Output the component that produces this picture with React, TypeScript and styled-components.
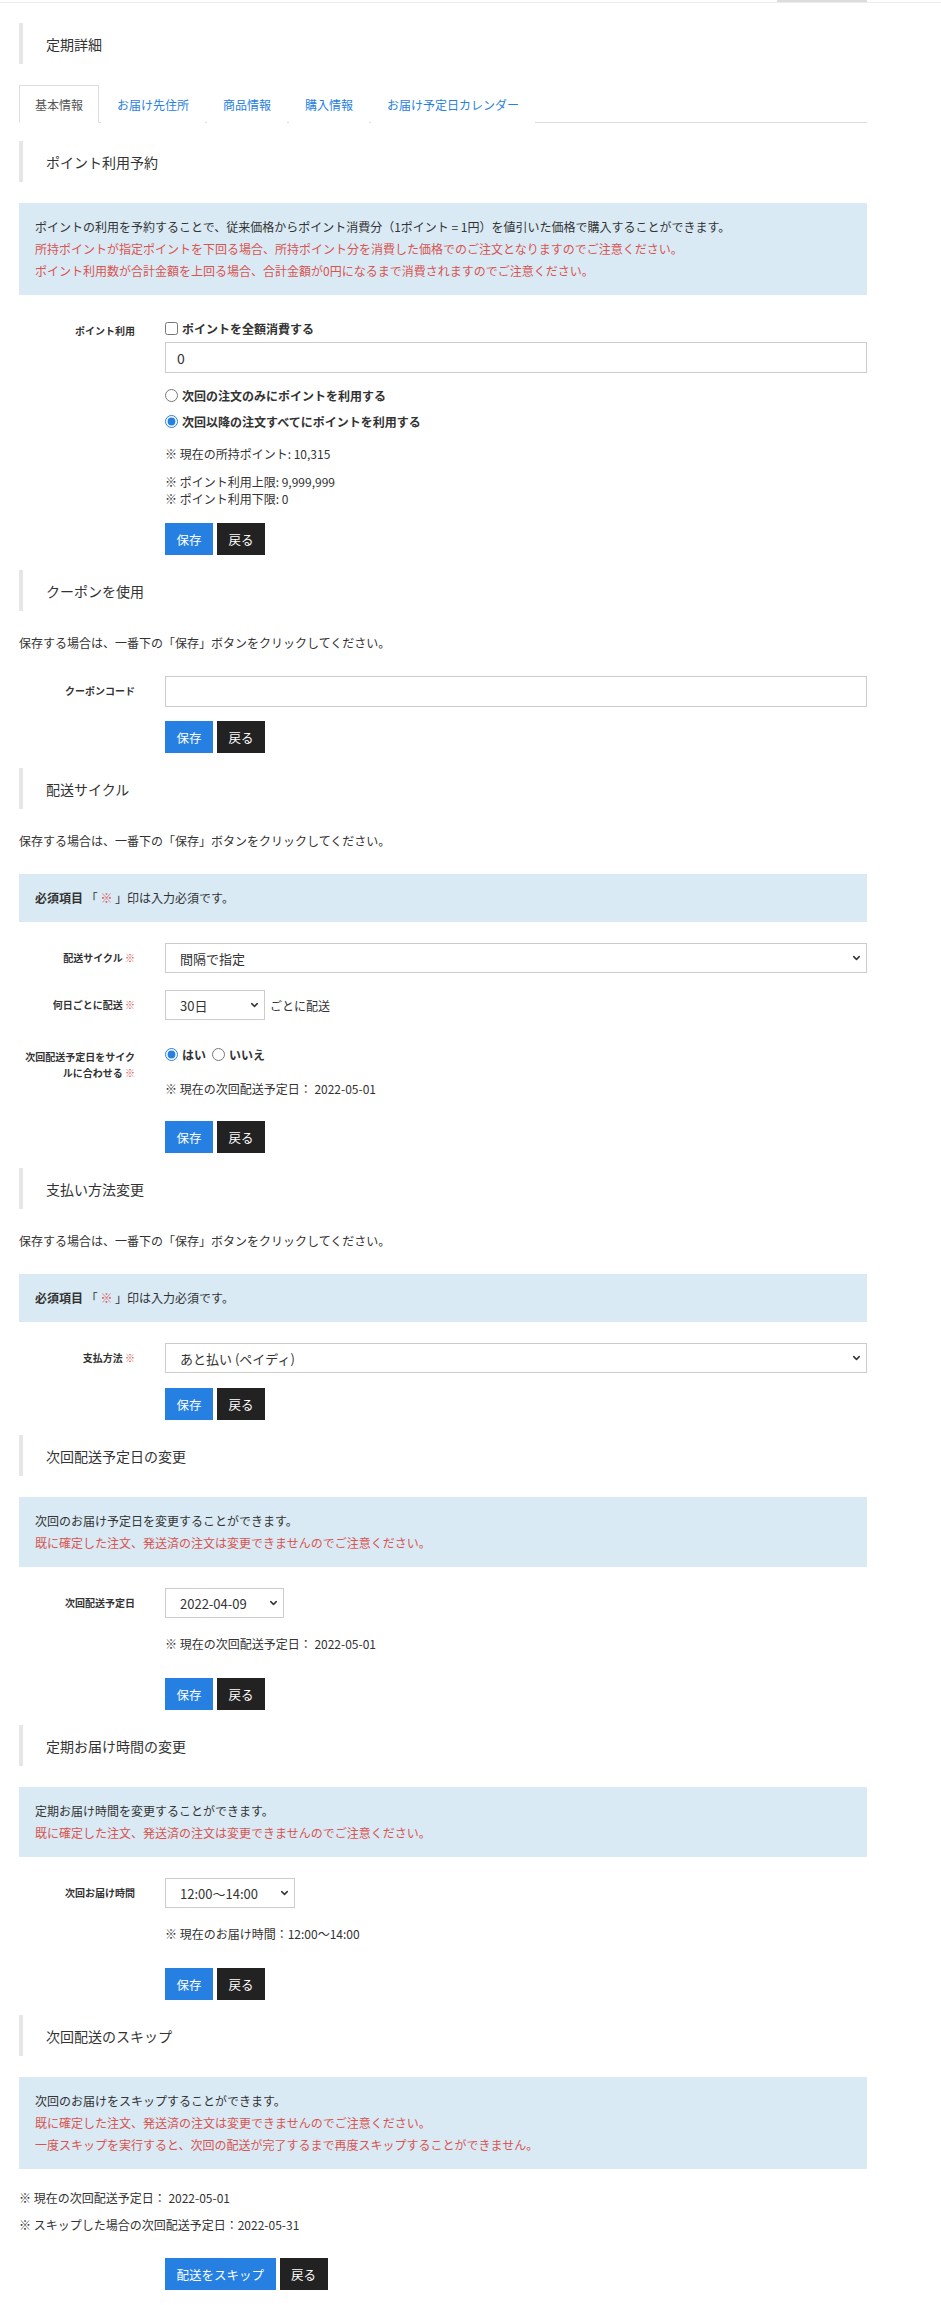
import React from "react";
import styled, { createGlobalStyle } from "styled-components";
import { ChevronDown } from "lucide-react";

const GlobalStyle = createGlobalStyle`
  html, body { margin: 0; padding: 0; background: #fff; }
  body {
    font-family: "Noto Sans CJK JP", "Noto Sans", sans-serif;
    color: #333;
    font-size: 12px;
  }
  * { box-sizing: border-box; }
`;

const RED = "#d9534f";
const BLUE = "#2680e2";

const TopStrip = styled.div`
  display: flex;
  justify-content: flex-end;
  padding-right: 74px;
  height: 3px;
  border-bottom: 1px solid #ececec;
`;

const TopTab = styled.div`
  width: 90px;
  height: 2px;
  background: #dcdcdc;
`;

const Page = styled.main`
  width: 848px;
  margin-left: 19px;
  padding-top: 20px;
  padding-bottom: 13px;
  display: flex;
  flex-direction: column;
`;

const Heading = styled.h2<{ $mt?: number; $mb?: number }>`
  margin: ${(p) => p.$mt ?? 15}px 0 ${(p) => p.$mb ?? 21}px;
  height: 41px;
  display: flex;
  align-items: center;
  border-left: 4px solid #e6e6e6;
  padding-left: 23px;
  font-size: 14px;
  font-weight: 400;
  color: #333;
`;

const TabList = styled.ul`
  list-style: none;
  margin: 0 0 18px;
  padding: 0;
  display: flex;
  height: 38px;
  border-bottom: 1px solid #ddd;
`;

const Tab = styled.li<{ $active?: boolean }>`
  margin: 0 2px -1px 0;
  padding: 0 15px;
  display: flex;
  align-items: center;
  font-size: 12px;
  color: ${(p) => (p.$active ? "#555" : BLUE)};
  border: 1px solid ${(p) => (p.$active ? "#ddd" : "transparent")};
  border-bottom-color: ${(p) => (p.$active ? "#fff" : "transparent")};
  background: #fff;
`;

const InfoBox = styled.div<{ $mb?: number }>`
  background: #d9eaf5;
  padding: 13px 16px;
  margin-bottom: ${(p) => p.$mb ?? 21}px;
  font-size: 12px;
  line-height: 22px;
`;

const InfoLine = styled.p<{ $red?: boolean }>`
  margin: 0;
  color: ${(p) => (p.$red ? RED : "#333")};
`;

const Strong = styled.strong`
  font-weight: 700;
`;

const Mark = styled.span`
  color: ${RED};
  font-weight: 400;
`;

const Lead = styled.p`
  margin: 0 0 22px;
  font-size: 12px;
  line-height: 22px;
`;

const FormRow = styled.div<{ $mt?: number }>`
  display: grid;
  grid-template-columns: 116px 1fr;
  column-gap: 30px;
  margin-top: ${(p) => p.$mt ?? 0}px;
`;

const Label = styled.div`
  text-align: right;
  font-size: 10px;
  font-weight: 700;
  line-height: 16px;
  padding-top: 7px;
  color: #333;
`;

const Field = styled.div`
  display: flex;
  flex-direction: column;
  align-items: flex-start;
  min-width: 0;
`;

const TextInput = styled.input<{ $mt?: number }>`
  width: 100%;
  height: 31px;
  margin-top: ${(p) => p.$mt ?? 0}px;
  border: 1px solid #ccc;
  padding: 0 11px;
  font-family: inherit;
  font-size: 14px;
  color: #333;
  background: #fff;
  outline: none;
`;

const SelectWrap = styled.div<{ $w?: number }>`
  position: relative;
  width: ${(p) => (p.$w ? `${p.$w}px` : "100%")};
  flex: none;
`;

const SelectBox = styled.select`
  appearance: none;
  -webkit-appearance: none;
  width: 100%;
  height: 30px;
  border: 1px solid #ccc;
  border-radius: 0;
  padding: 0 24px 0 14px;
  font-family: inherit;
  font-size: 13px;
  color: #333;
  background: #fff;
  outline: none;
`;

const Chevron = styled(ChevronDown)`
  position: absolute;
  right: 5px;
  top: 50%;
  transform: translateY(-50%);
  pointer-events: none;
  color: #333;
`;

const InlineGroup = styled.div`
  display: flex;
  align-items: center;
  gap: 5px;
  font-size: 12px;
`;

const CheckLine = styled.label<{ $mt?: number }>`
  display: flex;
  align-items: center;
  gap: 4px;
  height: 24px;
  margin-top: ${(p) => p.$mt ?? 0}px;
  font-size: 12px;
  font-weight: 700;
  color: #333;
`;

const ChoiceRow = styled.div<{ $mt?: number }>`
  display: flex;
  align-items: center;
  gap: 6px;
  margin-top: ${(p) => p.$mt ?? 0}px;
`;

const Box = styled.input`
  margin: 0;
  width: 13px;
  height: 13px;
  accent-color: ${BLUE};
`;

const Note = styled.p<{ $mt?: number }>`
  margin: ${(p) => p.$mt ?? 0}px 0 0;
  font-size: 12px;
  line-height: 17px;
  color: #333;
`;

const ButtonRow = styled.div<{ $mt?: number }>`
  display: flex;
  gap: 4px;
  margin-top: ${(p) => p.$mt ?? 15}px;
  padding-left: 146px;
`;

const Button = styled.button<{ $variant?: "primary" | "dark" }>`
  height: 32px;
  padding: 0 11.5px;
  border: none;
  border-radius: 0;
  font-family: inherit;
  font-size: 12.5px;
  color: #fff;
  background: ${(p) => (p.$variant === "dark" ? "#222" : BLUE)};
  cursor: pointer;
`;

const Select = ({ value, options, width }: { value: string; options: string[]; width?: number }) => (
  <SelectWrap $w={width}>
    <SelectBox defaultValue={value}>
      {options.map((o) => (
        <option key={o}>{o}</option>
      ))}
    </SelectBox>
    <Chevron size={11} strokeWidth={3.2} />
  </SelectWrap>
);

const Req = () => <Mark> ※</Mark>;

const Actions = ({ mt, primary = "保存" }: { mt?: number; primary?: string }) => (
  <ButtonRow $mt={mt}>
    <Button $variant="primary">{primary}</Button>
    <Button $variant="dark">戻る</Button>
  </ButtonRow>
);

const SAVE_NOTE = "保存する場合は、一番下の「保存」ボタンをクリックしてください。";
const LOCKED = "既に確定した注文、発送済の注文は変更できませんのでご注意ください。";

const Required = () => (
  <InfoBox>
    <InfoLine>
      <Strong>必須項目</Strong> 「 <Mark>※</Mark> 」印は入力必須です。
    </InfoLine>
  </InfoBox>
);

export default function App() {
  return (
    <>
      <GlobalStyle />
      <TopStrip>
        <TopTab />
      </TopStrip>
      <Page>
        <Heading $mt={0}>定期詳細</Heading>
        <TabList>
          <Tab $active>基本情報</Tab>
          <Tab>お届け先住所</Tab>
          <Tab>商品情報</Tab>
          <Tab>購入情報</Tab>
          <Tab>お届け予定日カレンダー</Tab>
        </TabList>

        <Heading $mt={0}>ポイント利用予約</Heading>
        <InfoBox>
          <InfoLine>
            ポイントの利用を予約することで、従来価格からポイント消費分（1ポイント = 1円）を値引いた価格で購入することができます。
          </InfoLine>
          <InfoLine $red>
            所持ポイントが指定ポイントを下回る場合、所持ポイント分を消費した価格でのご注文となりますのでご注意ください。
          </InfoLine>
          <InfoLine $red>
            ポイント利用数が合計金額を上回る場合、合計金額が0円になるまで消費されますのでご注意ください。
          </InfoLine>
        </InfoBox>
        <FormRow>
          <Label>ポイント利用</Label>
          <Field>
            <CheckLine>
              <Box type="checkbox" />
              ポイントを全額消費する
            </CheckLine>
            <TextInput $mt={2} defaultValue="0" />
            <CheckLine $mt={10}>
              <Box type="radio" name="pointScope" />
              次回の注文のみにポイントを利用する
            </CheckLine>
            <CheckLine $mt={2}>
              <Box type="radio" name="pointScope" defaultChecked />
              次回以降の注文すべてにポイントを利用する
            </CheckLine>
            <Note $mt={12}>※ 現在の所持ポイント: 10,315</Note>
            <Note $mt={11}>
              ※ ポイント利用上限: 9,999,999
              <br />※ ポイント利用下限: 0
            </Note>
          </Field>
        </FormRow>
        <Actions mt={16} />

        <Heading>クーポンを使用</Heading>
        <Lead>{SAVE_NOTE}</Lead>
        <FormRow>
          <Label>クーポンコード</Label>
          <Field>
            <TextInput />
          </Field>
        </FormRow>
        <Actions mt={14} />

        <Heading>配送サイクル</Heading>
        <Lead>{SAVE_NOTE}</Lead>
        <Required />
        <FormRow>
          <Label>
            配送サイクル
            <Req />
          </Label>
          <Field>
            <Select value="間隔で指定" options={["間隔で指定", "日付で指定", "曜日で指定"]} />
          </Field>
        </FormRow>
        <FormRow $mt={17}>
          <Label>
            何日ごとに配送
            <Req />
          </Label>
          <Field>
            <InlineGroup>
              <Select value="30日" options={["10日", "20日", "30日", "45日", "60日"]} width={100} />
              ごとに配送
            </InlineGroup>
          </Field>
        </FormRow>
        <FormRow $mt={22}>
          <Label>
            次回配送予定日をサイクルに合わせる
            <Req />
          </Label>
          <Field>
            <ChoiceRow>
              <CheckLine>
                <Box type="radio" name="align" defaultChecked />
                はい
              </CheckLine>
              <CheckLine>
                <Box type="radio" name="align" />
                いいえ
              </CheckLine>
            </ChoiceRow>
            <Note $mt={14}>※ 現在の次回配送予定日： 2022-05-01</Note>
          </Field>
        </FormRow>
        <Actions mt={24} />

        <Heading>支払い方法変更</Heading>
        <Lead>{SAVE_NOTE}</Lead>
        <Required />
        <FormRow>
          <Label>
            支払方法
            <Req />
          </Label>
          <Field>
            <Select value="あと払い (ペイディ)" options={["あと払い (ペイディ)", "クレジットカード", "代金引換"]} />
          </Field>
        </FormRow>
        <Actions mt={15} />

        <Heading>次回配送予定日の変更</Heading>
        <InfoBox>
          <InfoLine>次回のお届け予定日を変更することができます。</InfoLine>
          <InfoLine $red>{LOCKED}</InfoLine>
        </InfoBox>
        <FormRow>
          <Label>次回配送予定日</Label>
          <Field>
            <Select value="2022-04-09" options={["2022-04-09", "2022-04-16", "2022-05-01"]} width={119} />
            <Note $mt={17}>※ 現在の次回配送予定日： 2022-05-01</Note>
          </Field>
        </FormRow>
        <Actions mt={26} />

        <Heading>定期お届け時間の変更</Heading>
        <InfoBox>
          <InfoLine>定期お届け時間を変更することができます。</InfoLine>
          <InfoLine $red>{LOCKED}</InfoLine>
        </InfoBox>
        <FormRow>
          <Label>次回お届け時間</Label>
          <Field>
            <Select value="12:00〜14:00" options={["指定なし", "12:00〜14:00", "14:00〜16:00"]} width={130} />
            <Note $mt={17}>※ 現在のお届け時間：12:00〜14:00</Note>
          </Field>
        </FormRow>
        <Actions mt={26} />

        <Heading>次回配送のスキップ</Heading>
        <InfoBox $mb={0}>
          <InfoLine>次回のお届けをスキップすることができます。</InfoLine>
          <InfoLine $red>{LOCKED}</InfoLine>
          <InfoLine $red>
            一度スキップを実行すると、次回の配送が完了するまで再度スキップすることができません。
          </InfoLine>
        </InfoBox>
        <Note $mt={20}>※ 現在の次回配送予定日： 2022-05-01</Note>
        <Note $mt={10}>※ スキップした場合の次回配送予定日：2022-05-31</Note>
        <Actions mt={25} primary="配送をスキップ" />
      </Page>
    </>
  );
}
